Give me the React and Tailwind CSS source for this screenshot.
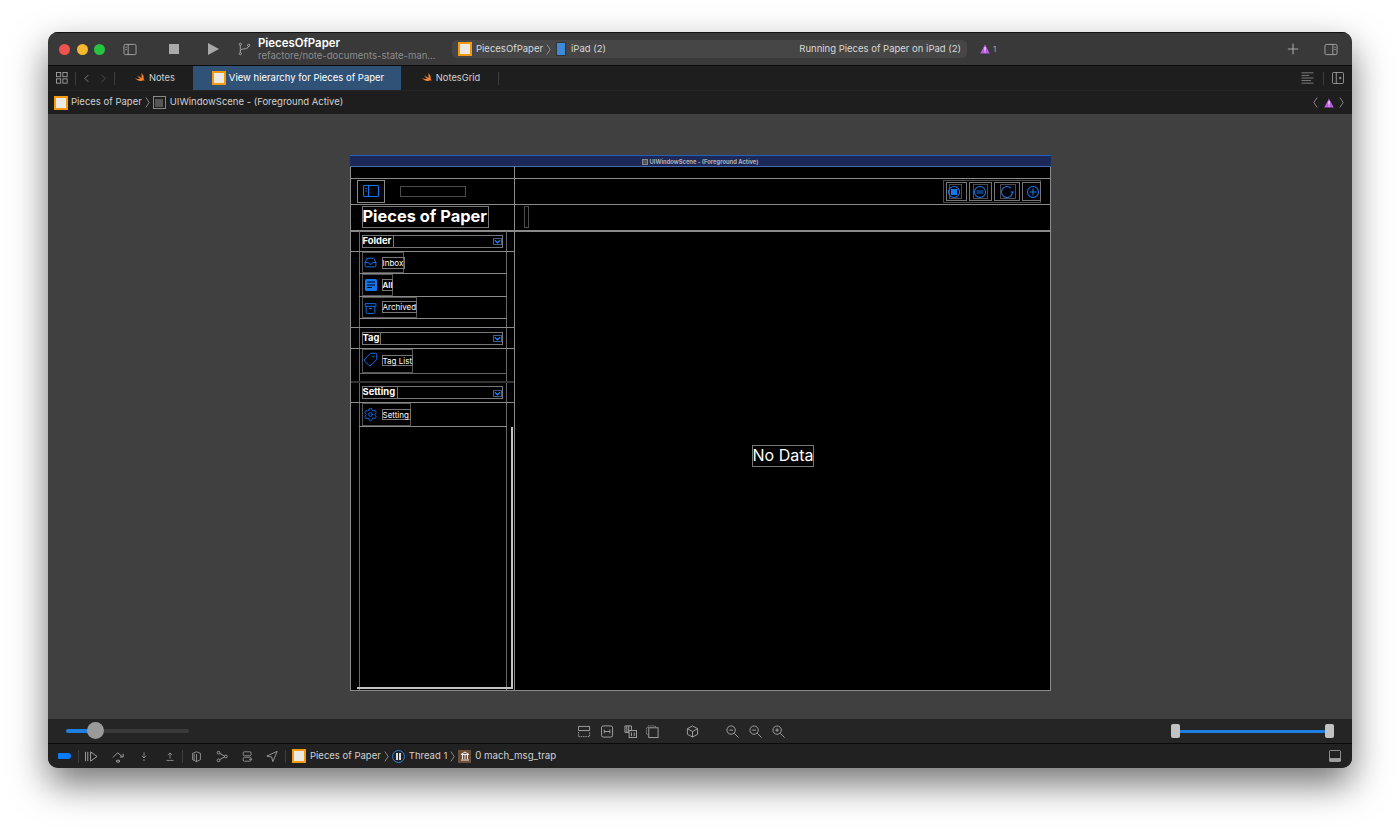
import { Archive, ChevronLeft, ChevronRight, Inbox, Settings, Tag } from "lucide-react";

const AppIcon = ({ className = "" }) => (
  <div className={`w-[14px] h-[14px] bg-[#f59a0c] flex items-center justify-center shrink-0 ${className}`}>
    <div className="w-[10px] h-[10px] bg-[#ece9e2]" />
  </div>
);

const Swift = () => (
  <svg viewBox="0 0 24 24" className="w-[12px] h-[12px] shrink-0" fill="#ee7f35">
    <path d="M14.5 2.5c3.5 2.5 5.8 6.5 4.7 10.5 1.5 2 1.8 4 1.3 5-.9-1.6-2.6-1.6-3.5-1.2-3 1.6-7 1.4-10.4-.9-2-1.3-3.6-3-4.6-4.6 1 .8 2.2 1.5 3.4 2 2.4 1.1 4.8 1 6.5 0-2.4-1.9-4.5-4.3-6-6.4 1.3 1.2 3.4 2.8 5 3.9-1.1-1.3-2.2-2.9-3.1-4.4 2 2.1 4.7 4.2 7 5.7.8-2.3.2-6-.3-9.6z" />
  </svg>
);

const Chevron = ({ className = "" }) => (
  <svg viewBox="0 0 6 14" className={`w-[5px] h-[13px] shrink-0 ${className}`} fill="none" stroke="#a8a8a8" strokeWidth="0.9">
    <path d="M1 1l4 6-4 6" />
  </svg>
);

const Warn = ({ className = "" }) => (
  <svg viewBox="0 0 10 10" className={`w-[10px] h-[10px] shrink-0 ${className}`}>
    <path d="M5 .5 9.8 9.5H.2z" fill="#b95be0" />
    <path d="M5 3v3.6M5 7.6v1" stroke="#fff" strokeWidth="1" />
  </svg>
);

const Sep = ({ className = "" }) => <div className={`w-px h-[13px] bg-[#3d3d3d] shrink-0 ${className}`} />;

// small 14x14 line icon used in the window chrome
const Glyph = ({ className = "", size = "w-[13px] h-[13px]", children }) => (
  <svg viewBox="0 0 14 14" className={`${size} shrink-0 ${className}`} fill="none" stroke="#a6a6a6" strokeWidth="1">
    {children}
  </svg>
);

const Frame = ({ className = "", children }) => (
  <div className={`absolute border border-[#8a8a8a] ${className}`}>{children}</div>
);

const Dim = ({ className = "", children }) => (
  <div className={`absolute border border-[#4c4c4c] ${className}`}>{children}</div>
);

const Line = ({ className = "" }) => <div className={`absolute bg-[#8a8a8a] ${className}`} />;

const Label = ({ className = "", children }) => (
  <div className={`absolute border border-[#777] flex items-center whitespace-nowrap text-white ${className}`}>
    {children}
  </div>
);

const Drop = ({ className = "" }) => (
  <svg viewBox="0 0 9 7" className={`absolute w-[9px] h-[7px] ${className}`} fill="none">
    <rect x=".5" y=".5" width="8" height="6" stroke="#3b5f96" />
    <path d="M1.8 2.2l2.7 2.5 2.7-2.5" stroke="#1f7ff0" strokeWidth="1.4" />
  </svg>
);

const Round = ({ className = "", children }) => (
  <svg viewBox="0 0 14 14" className={`absolute w-[14px] h-[14px] ${className}`} fill="none" stroke="#1476ef" strokeWidth="1.1">
    {children}
  </svg>
);

const Device = () => (
  <div className="relative w-[701px] h-[536px] bg-black border border-[#8a8a8a] border-t-0">
    {/* scene title bar */}
    <div className="absolute left-[-1px] top-0 w-[701px] h-[12px] bg-[#1c2858] border-t border-t-[#2460b8] border-b border-b-[#4a6aa8] flex items-center justify-center gap-[2px] pt-px">
      <div className="w-[6px] h-[6px] border border-[#888] bg-[#555]" />
      <span className="text-[5.8px] font-bold text-[#b0b0b0] leading-[10px]">UIWindowScene - (Foreground Active)</span>
    </div>

    <Line className="left-[163px] top-[11px] w-px h-[524px]" />
    <Line className="left-0 top-[23px] w-[699px] h-px" />
    <Line className="left-0 top-[49px] w-[699px] h-px" />
    <Line className="left-0 top-[75px] w-[699px] h-[2px]" />
    <Line className="left-[8px] top-[76px] w-px h-[459px] bg-[#666]" />
    <Line className="left-[155px] top-[76px] w-px h-[459px] bg-[#666]" />

    {/* nav bar left */}
    <Frame className="left-[6px] top-[25px] w-[28px] h-[23px] border-[#6c6c6c]" />
    <svg viewBox="0 0 16 12" className="absolute left-[12px] top-[30px] w-[16px] h-[12px]" fill="none" stroke="#1476ef" strokeWidth="1.1">
      <rect x=".5" y=".5" width="15" height="11" rx="1.5" />
      <path d="M5.5 .5v11M2.2 3.5h1.6M2.2 6h1.6" />
    </svg>
    <Dim className="left-[49px] top-[31px] w-[66px] h-[11px]" />
    <Label className="left-[11px] top-[51px] w-[127px] h-[22px] border-[#4c4c4c] pb-px text-[16.4px] font-bold leading-none">Pieces of Paper</Label>
    <Dim className="left-[173px] top-[51px] w-[5px] h-[22px]" />

    {/* Folder section */}
    <Frame className="left-[11px] top-[80px] w-[141px] h-[13px] border-[#777]" />
    <Label className="left-[11px] top-[80px] w-[32px] h-[13px] pb-px text-[9.4px] font-bold">Folder</Label>
    <Drop className="left-[142px] top-[83px]" />
    <Line className="left-0 top-[96px] w-[163px] h-px" />
    <Frame className="left-[11px] top-[97px] w-[42px] h-[21px] border-[#555]" />
    <Inbox className="absolute left-[12px] top-[101px] w-[15px] h-[13px] text-[#0f72f2]" strokeWidth={1.8} />
    <Label className="left-[31px] top-[102px] w-[23px] h-[12px] text-[8px]">Inbox</Label>
    <Line className="left-[8px] top-[118px] w-[148px] h-px" />
    <Frame className="left-[11px] top-[119px] w-[31px] h-[22px] border-[#555]" />
    <svg viewBox="0 0 12 12" className="absolute left-[14px] top-[124px] w-[12px] h-[12px]">
      <rect width="12" height="12" rx="1.5" fill="#1476ef" />
      <path d="M2 3h8M2 6h8M2 8.5h5" stroke="#000" strokeWidth="1" />
    </svg>
    <Label className="left-[31px] top-[124px] w-[11px] h-[12px] text-[8px] font-semibold">All</Label>
    <Line className="left-[8px] top-[141px] w-[148px] h-px" />
    <Frame className="left-[11px] top-[142px] w-[55px] h-[21px] border-[#555]" />
    <Archive className="absolute left-[13px] top-[147px] w-[13px] h-[13px] text-[#0f72f2]" strokeWidth={1.8} />
    <Label className="left-[31px] top-[146px] w-[35px] h-[12px] text-[8px]">Archived</Label>
    <Line className="left-[8px] top-[163px] w-[148px] h-px" />

    {/* Tag section */}
    <Line className="left-0 top-[172px] w-[163px] h-px" />
    <Frame className="left-[11px] top-[177px] w-[141px] h-[13px] border-[#777]" />
    <Label className="left-[11px] top-[177px] w-[19px] h-[13px] pb-px text-[9.4px] font-bold">Tag</Label>
    <Drop className="left-[142px] top-[180px]" />
    <Line className="left-0 top-[193px] w-[163px] h-px" />
    <Frame className="left-[11px] top-[194px] w-[51px] h-[24px] border-[#555]" />
    <Tag className="absolute left-[12px] top-[197px] w-[15px] h-[15px] text-[#0f72f2] scale-x-[-1]" strokeWidth={1.6} />
    <Label className="left-[31px] top-[200px] w-[31px] h-[11px] text-[8px]">Tag List</Label>
    <Line className="left-[8px] top-[218px] w-[148px] h-px bg-[#666]" />
    <Line className="left-0 top-[226px] w-[163px] h-[2px] bg-[#333]" />

    {/* Setting section */}
    <Frame className="left-[11px] top-[231px] w-[141px] h-[13px] border-[#777]" />
    <Label className="left-[11px] top-[231px] w-[36px] h-[13px] pb-px text-[9.4px] font-bold">Setting</Label>
    <Drop className="left-[142px] top-[235px]" />
    <Line className="left-0 top-[247px] w-[163px] h-px" />
    <Frame className="left-[11px] top-[248px] w-[49px] h-[23px] border-[#555]" />
    <Settings className="absolute left-[12px] top-[252px] w-[15px] h-[15px] text-[#0f72f2]" strokeWidth={1.6} />
    <Label className="left-[31px] top-[254px] w-[29px] h-[11px] text-[8px]">Setting</Label>
    <Line className="left-[8px] top-[271px] w-[148px] h-px" />

    {/* scroll indicators */}
    <div className="absolute left-[160px] top-[272px] w-[2px] h-[262px] bg-[#c4c4c4]" />
    <div className="absolute left-[6px] top-[532px] w-[156px] h-[2px] bg-[#c4c4c4]" />

    {/* nav bar right */}
    <Dim className="left-[592px] top-[25px] w-[98px] h-[23px]" />
    <Frame className="left-[595px] top-[27px] w-[21px] h-[19px] border-[#777]" />
    <Dim className="left-[598px] top-[29px] w-[13px] h-[15px]" />
    <Round className="left-[596px] top-[30px]">
      <circle cx="7" cy="7" r="5.5" />
      <rect x="4" y="4" width="6" height="6" fill="#1476ef" stroke="none" />
    </Round>
    <Frame className="left-[618px] top-[27px] w-[23px] h-[19px] border-[#777]" />
    <Dim className="left-[622px] top-[29px] w-[15px] h-[15px]" />
    <Round className="left-[622px] top-[30px]">
      <circle cx="7" cy="7" r="5.5" />
      <path d="M3.5 6h7M3.5 8h7" />
    </Round>
    <Frame className="left-[643px] top-[27px] w-[26px] h-[19px] border-[#777]" />
    <Dim className="left-[649px] top-[29px] w-[16px] h-[15px]" />
    <Round className="left-[649px] top-[30px]">
      <path d="M11 3.2A5.5 5.5 0 1 0 12.5 7" />
      <path d="M10.5 7h3.5" />
    </Round>
    <Frame className="left-[671px] top-[27px] w-[19px] h-[19px] border-[#777]" />
    <Round className="left-[675px] top-[30px]">
      <circle cx="7" cy="7" r="5.5" />
      <path d="M3.5 7h7M7 3.5v7" />
    </Round>

    <Label className="left-[401px] top-[290px] w-[62px] h-[22px] border-[#5c5c5c] pb-[2px] text-[16px] font-normal leading-none">No Data</Label>
  </div>
);

const Toolbar = () => (
  <div className="h-[34px] shrink-0 bg-[#393939] border-t border-t-[#111] border-b border-b-[#0c0c0c] flex items-center pl-[11px] pr-[13px] text-[#d8d8d8] text-[9.5px]">
    <div className="w-[11px] h-[11px] rounded-full bg-[#f0524f]" />
    <div className="w-[11px] h-[11px] rounded-full bg-[#f5b82e] ml-[6.5px]" />
    <div className="w-[11px] h-[11px] rounded-full bg-[#27c43f] ml-[6.5px]" />
    <Glyph size="w-[16px] h-[13px]" className="ml-[17px]">
      <rect x=".5" y="1.5" width="13" height="11" rx="1.5" />
      <path d="M5 1.5v11M2 4.5h1.5M2 7h1.5" />
    </Glyph>
    <div className="w-[10px] h-[10px] bg-[#aaa] ml-[31px]" />
    <svg viewBox="0 0 11 12" className="w-[11px] h-[12px] ml-[29px] shrink-0"><path d="M0 0l11 6-11 6z" fill="#a8a8a8" /></svg>
    <Glyph className="ml-[19px]" size="w-[13px] h-[14px]">
      <circle cx="2.5" cy="2" r="1.2" />
      <circle cx="2.5" cy="12" r="1.2" />
      <circle cx="11.5" cy="3" r="1.2" />
      <path d="M2.5 3.2v7.6M2.5 9c0-3 8-1 9-4.8" />
    </Glyph>
    <div className="ml-[7px] flex flex-col w-[189px] leading-none">
      <span className="text-[11.4px] font-semibold text-white leading-[13px]">PiecesOfPaper</span>
      <span className="text-[9.55px] text-[#8c8c8c] leading-[12px] whitespace-nowrap">refactore/note-documents-state-man...</span>
    </div>
    <div className="ml-[5px] w-[515px] h-[18px] bg-[#464646] rounded-[5px] flex items-center pl-[6px] pr-[6px]">
      <AppIcon />
      <span className="ml-[4px]">PiecesOfPaper</span>
      <Chevron className="ml-[3px]" />
      <div className="w-[10px] h-[14px] bg-[#3d8ad8] border border-[#333] ml-[5px] shrink-0" />
      <span className="ml-[5px]">iPad (2)</span>
      <span className="ml-auto">Running Pieces of Paper on iPad (2)</span>
    </div>
    <Warn className="ml-[13px]" />
    <span className="ml-[3px] text-[8px] text-[#aaa]">1</span>
    <Glyph className="ml-auto" size="w-[12px] h-[12px]">
      <path d="M7 1v12M1 7h12" strokeWidth="1.3" />
    </Glyph>
    <Glyph className="ml-[24px]" size="w-[16px] h-[13px]">
      <rect x=".5" y="1.5" width="13" height="11" rx="1.5" />
      <path d="M9 1.5v11M10.5 4.5H12M10.5 7H12" />
    </Glyph>
  </div>
);

const Tabs = () => (
  <div className="h-[24px] shrink-0 bg-[#1e1e1e] flex items-center pl-[8px] pr-[8px] text-[#d2d2d2] text-[9.3px]">
    <Glyph size="w-[12px] h-[12px]">
      <rect x=".5" y=".5" width="5" height="5" />
      <rect x="8" y=".5" width="5" height="5" />
      <rect x=".5" y="8" width="5" height="5" />
      <rect x="8" y="8" width="5" height="5" />
    </Glyph>
    <Sep className="ml-[7px]" />
    <ChevronLeft className="w-[13px] h-[13px] ml-[4px] text-[#aaa]" strokeWidth={1.2} />
    <ChevronRight className="w-[13px] h-[13px] ml-[4px] text-[#666]" strokeWidth={1.2} />
    <Sep className="ml-[4px]" />
    <div className="ml-[19px]"><Swift /></div>
    <span className="ml-[3px]">Notes</span>
    <div className="ml-[18px] w-[208px] h-full bg-[#315277] text-white flex items-center pl-[19px] text-[9.5px]">
      <AppIcon />
      <span className="ml-[3px]">View hierarchy for Pieces of Paper</span>
    </div>
    <div className="ml-[20px]"><Swift /></div>
    <span className="ml-[3px]">NotesGrid</span>
    <Sep className="ml-[18px]" />
    <Glyph className="ml-auto" size="w-[15px] h-[12px]">
      <path d="M0 1h14M0 4h9M0 7h14M0 10h11M0 13h14" strokeWidth="0.8" />
    </Glyph>
    <Sep className="ml-[8px]" />
    <Glyph className="ml-[8px]" size="w-[12px] h-[12px]">
      <rect x=".5" y=".5" width="13" height="13" rx="1.5" />
      <path d="M5 .5v13M8 7h3M9.5 5.5v3" />
    </Glyph>
  </div>
);

const PathBar = () => (
  <div className="h-[24px] shrink-0 bg-[#1e1e1e] border-t border-t-[#262626] flex items-center pl-[6px] pr-[8px] text-[#d2d2d2] text-[9.5px]">
    <AppIcon />
    <span className="ml-[3px]">Pieces of Paper</span>
    <Chevron className="ml-[3px]" />
    <div className="ml-[3px] w-[13px] h-[13px] border border-[#888] flex items-center justify-center">
      <div className="w-[8px] h-[8px] bg-[#555]" />
    </div>
    <span className="ml-[4px]">UIWindowScene - (Foreground Active)</span>
    <Chevron className="ml-auto scale-x-[-1]" />
    <Warn className="ml-[6px]" />
    <Chevron className="ml-[5px]" />
  </div>
);

const Zoom = ({ className = "", minus, plus }) => (
  <Glyph className={className}>
    <circle cx="5.5" cy="5.5" r="4.5" />
    <path d="M9 9l4.5 4.5" />
    {minus && <path d="M3.5 5.5h4" />}
    {plus && <path d="M5.5 3.5v4" />}
  </Glyph>
);

const CanvasControls = () => (
  <div className="h-[25px] shrink-0 bg-[#252525] border-b border-b-[#0a0a0a] flex items-center pl-[18px] pr-[18px]">
    <div className="relative w-[123px] h-[4px] rounded-full bg-[#3a3a3a]">
      <div className="h-full w-[30px] rounded-l-full bg-[#1f7fe0]" />
      <div className="absolute left-[21px] top-[-7px] w-[17px] h-[17px] rounded-full bg-[#9a9a9a]" />
    </div>
    <Glyph className="ml-[389px]">
      <path d="M.5 6V1.5h12V6M.5 6h12" />
      <path d="M.5 7.5v5h12v-5" strokeDasharray="1.5 1" />
    </Glyph>
    <Glyph className="ml-[10px]">
      <rect x=".5" y="1" width="12" height="12" rx="2" />
      <path d="M3.5 5v4M9.5 5v4M3.5 7h6" />
    </Glyph>
    <Glyph className="ml-[10px]">
      <path d="M1 1h7v7H1zM3 1v7M5 1v7" />
      <rect x="5.5" y="6" width="8" height="7.5" fill="#252525" />
      <path d="M8 8v4M11 8v4" />
    </Glyph>
    <Glyph className="ml-[9px]">
      <path d="M2 3V1h8v2M.5 3v7h2" strokeDasharray="1 1" />
      <rect x="3" y="3" width="10" height="10.5" />
    </Glyph>
    <Glyph className="ml-[27px]">
      <path d="M7 1l5.5 3v6L7 13l-5.5-3V4zM1.5 4L7 7l5.5-3M7 7v6" />
    </Glyph>
    <Zoom className="ml-[27px]" minus />
    <Zoom className="ml-[10px]" minus />
    <Zoom className="ml-[10px]" minus plus />
    <div className="ml-[386px] relative w-[163px] h-[14px] flex items-center">
      <div className="absolute left-[4px] right-[4px] h-[3px] bg-[#1f7fe0]" />
      <div className="absolute left-0 w-[9px] h-[14px] rounded-[2px] bg-[#c2c2c2]" />
      <div className="absolute right-0 w-[9px] h-[14px] rounded-[2px] bg-[#c2c2c2]" />
    </div>
  </div>
);

const DebugBar = () => (
  <div className="h-[24px] shrink-0 bg-[#212121] flex items-center pl-[10px] pr-[11px] text-[#d2d2d2] text-[9.5px]">
    <div className="w-[13px] h-[6px] rounded-l-[1px] rounded-r-[3px] bg-[#0a7cff]" />
    <Sep className="ml-[7px]" />
    <Glyph className="ml-[6px]">
      <path d="M.5 2v10M3 2v10M6 2l7 5-7 5z" />
    </Glyph>
    <Glyph className="ml-[14px]">
      <path d="M1 8l5-5 5 4M12 4v3.5H8.5M5 11h3v2H5z" />
    </Glyph>
    <Glyph className="ml-[14px]" size="w-[10px] h-[13px]">
      <path d="M7 1v8M4 6l3 3 3-3M5.5 12h3" />
    </Glyph>
    <Glyph className="ml-[16px]" size="w-[10px] h-[13px]">
      <path d="M7 10V2M4 5l3-3 3 3M2 12.5h10" />
    </Glyph>
    <Sep className="ml-[7px]" />
    <Glyph className="ml-[8px]" size="w-[11px] h-[13px]">
      <path d="M2 3l5-2 5 2v8l-5 2.5L2 11zM7 4v9.5M4 3.5v8" />
    </Glyph>
    <Glyph className="ml-[14px]" size="w-[12px] h-[13px]">
      <circle cx="3" cy="2.5" r="1.6" />
      <circle cx="3" cy="11.5" r="1.6" />
      <circle cx="11.5" cy="7" r="1.6" />
      <path d="M4.5 3.5L10 6.5M4.5 10.5L10 7.5" />
    </Glyph>
    <Glyph className="ml-[14px]" size="w-[11px] h-[13px]">
      <rect x="1.5" y="1" width="10" height="5" rx="1.5" />
      <rect x="1.5" y="8" width="10" height="5" rx="1.5" />
      <path d="M9 10.5h4" />
    </Glyph>
    <Glyph className="ml-[13px]" size="w-[12px] h-[13px]">
      <path d="M13 1L1 6.5l5.5 1L8 13z" />
    </Glyph>
    <Sep className="ml-[7px]" />
    <AppIcon className="ml-[6px]" />
    <span className="ml-[4px]">Pieces of Paper</span>
    <Chevron className="ml-[3px]" />
    <div className="ml-[3px] w-[13px] h-[13px] rounded-full border border-[#2a7fe0] flex items-center justify-center gap-[1.5px] shrink-0">
      <div className="w-[1.5px] h-[7px] bg-[#ddd]" />
      <div className="w-[1.5px] h-[7px] bg-[#ddd]" />
    </div>
    <span className="ml-[4px]">Thread 1</span>
    <Chevron className="ml-[3px]" />
    <div className="ml-[3px] w-[13px] h-[13px] bg-[#6b4f38] flex items-center justify-center shrink-0">
      <svg viewBox="0 0 10 10" className="w-[10px] h-[10px]" fill="none" stroke="#eee" strokeWidth="1">
        <path d="M1 3.5L5 1l4 2.5zM2.5 4v4M5 4v4M7.5 4v4M1 9h8" />
      </svg>
    </div>
    <span className="ml-[4px] text-[9.7px]">0 mach_msg_trap</span>
    <Glyph className="ml-auto" size="w-[12px] h-[12px]">
      <rect x=".5" y=".5" width="13" height="13" rx="1.5" />
      <path d="M1 10h12v3H1z" fill="#9a9a9a" />
    </Glyph>
  </div>
);

export default function App() {
  return (
    <div className="w-[1400px] h-[831px] bg-white pt-[32px] pl-[48px] overflow-hidden [font-family:Inter,sans-serif]">
      <div className="w-[1304px] h-[736px] rounded-[10px] overflow-hidden flex flex-col bg-[#404040] shadow-[0_16px_36px_rgba(0,0,0,0.55)]">
        <Toolbar />
        <Tabs />
        <PathBar />
        <div className="flex-1 bg-[#404040] flex justify-center pt-[41px]">
          <Device />
        </div>
        <CanvasControls />
        <DebugBar />
      </div>
    </div>
  );
}
